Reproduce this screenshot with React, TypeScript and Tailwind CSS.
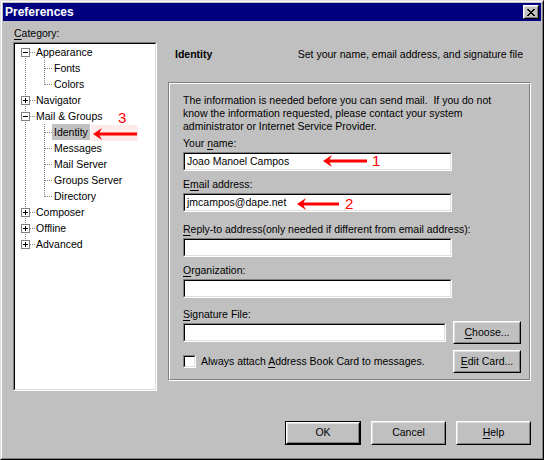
import type { ReactNode } from 'react';

type TreeRow = {
  label: string;
  level: 0 | 1;
  expander?: '+' | '-';
  first?: boolean;
  last?: boolean;
  lastChild?: boolean;
  selected?: boolean;
};

const treeRows: TreeRow[] = [
  { label: 'Appearance', level: 0, expander: '-', first: true },
  { label: 'Fonts', level: 1 },
  { label: 'Colors', level: 1, lastChild: true },
  { label: 'Navigator', level: 0, expander: '+' },
  { label: 'Mail & Groups', level: 0, expander: '-' },
  { label: 'Identity', level: 1, selected: true },
  { label: 'Messages', level: 1 },
  { label: 'Mail Server', level: 1 },
  { label: 'Groups Server', level: 1 },
  { label: 'Directory', level: 1, lastChild: true },
  { label: 'Composer', level: 0, expander: '+' },
  { label: 'Offline', level: 0, expander: '+' },
  { label: 'Advanced', level: 0, expander: '+', last: true },
];

function U({ children }: { children: string }) {
  return <span className="underline underline-offset-[2px]">{children}</span>;
}

function Sunken({ className = '', children }: { className?: string; children?: ReactNode }) {
  return (
    <div className={`border border-t-[#808080] border-l-[#808080] border-b-white border-r-white ${className}`}>
      <div className="h-full border border-t-black border-l-black border-b-[#dfdfdf] border-r-[#dfdfdf] bg-white">
        {children}
      </div>
    </div>
  );
}

function WinButton({ children, className = '', isDefault = false }: { children: ReactNode; className?: string; isDefault?: boolean }) {
  return (
    <button className={`bg-[#c0c0c0] p-0 ${isDefault ? 'border border-black' : ''} ${className}`}>
      <div className="h-full border border-t-white border-l-white border-b-black border-r-black">
        <div className="h-full border border-t-[#dfdfdf] border-l-[#dfdfdf] border-b-[#808080] border-r-[#808080] flex items-center justify-center">
          {children}
        </div>
      </div>
    </button>
  );
}

function TextField({ value = '', width = 'w-[269px]' }: { value?: string; width?: string }) {
  return (
    <Sunken className={`h-[19px] ${width}`}>
      <div className="h-full pl-[2px] flex items-center leading-none">{value}</div>
    </Sunken>
  );
}

function Connector({ row }: { row: TreeRow }) {
  const w = row.level === 0 ? 21 : 38;
  const dot = { stroke: '#808080', strokeWidth: 1, strokeDasharray: '1 1' };
  return (
    <svg width={w} height={16} shapeRendering="crispEdges" className="shrink-0">
      <line x1={10.5} x2={10.5} y1={row.first ? 8 : 0} y2={row.last ? 8 : 16} {...dot} />
      {row.level === 1 && (
        <>
          <line x1={29.5} x2={29.5} y1={0} y2={row.lastChild ? 9 : 16} {...dot} />
          <line x1={30} x2={38} y1={8.5} y2={8.5} {...dot} />
        </>
      )}
      {row.level === 0 && (
        <>
          <line x1={15} x2={21} y1={8.5} y2={8.5} {...dot} />
          <rect x={6.5} y={4.5} width={8} height={8} fill="white" stroke="#808080" />
          <line x1={8} x2={13} y1={8.5} y2={8.5} stroke="black" />
          {row.expander === '+' && <line x1={10.5} x2={10.5} y1={6} y2={11} stroke="black" />}
        </>
      )}
    </svg>
  );
}

function Arrow({ left, top, width }: { left: number; top: number; width: number }) {
  return (
    <svg className="absolute" style={{ left, top }} width={width} height={12} viewBox={`0 0 ${width} 12`}>
      <polygon points={`0,6 9,0 6.5,4.5 ${width},4.5 ${width},7.5 6.5,7.5 9,12`} fill="#ff0000" />
    </svg>
  );
}

export default function App() {
  return (
    <div className="w-[544px] h-[460px] relative font-['Liberation_Sans',Arial,sans-serif] text-[10.5px] text-black bg-[#c0c0c0] border border-t-[#dfdfdf] border-l-[#dfdfdf] border-b-black border-r-black">
      <div className="h-full border border-t-white border-l-white border-b-[#808080] border-r-[#808080] p-[1px] flex flex-col">
        {/* title bar */}
        <div className="h-[18px] bg-[#000080] flex items-center justify-between pl-[2px] pr-[2px]">
          <span className="text-white font-bold text-[12px] leading-none">Preferences</span>
          <WinButton className="w-[16px] h-[14px]">
            <svg width={8} height={7} shapeRendering="crispEdges">
              <path d="M0 0h2v1H0zM6 0h2v1H6zM1 1h2v1H1zM5 1h2v1H5zM2 2h4v1H2zM3 3h2v1H3zM2 4h4v1H2zM1 5h2v1H1zM5 5h2v1H5zM0 6h2v1H0zM6 6h2v1H6z" fill="black" />
            </svg>
          </WinButton>
        </div>

        {/* body */}
        <div className="flex pl-[10px] pr-[10px] mt-[6px]">
          {/* category tree */}
          <div className="w-[144px] flex flex-col">
            <div className="h-[13px] leading-[13px] pl-[1px]">
              <U>C</U>ategory:
            </div>
            <Sunken className="mt-[2px] h-[349px] w-[144px]">
              <div className="flex flex-col">
                {treeRows.map((row) => (
                  <div key={row.label} className="h-[16px] flex items-center">
                    <Connector row={row} />
                    <span
                      className={`h-[16px] leading-[16px] px-[2px] whitespace-nowrap ${
                        row.selected ? 'bg-[#c0c0c0]' : ''
                      } ${row.level === 1 ? '-ml-[1px]' : '-ml-[2px]'}`}
                    >
                      {row.label}
                    </span>
                  </div>
                ))}
              </div>
            </Sunken>
          </div>

          {/* identity panel */}
          <div className="w-[363px] ml-[11px] flex flex-col">
            <div className="mt-[21px] h-[13px] leading-[13px] flex justify-between pl-[7px] pr-[8px]">
              <span className="font-bold">Identity</span>
              <span>Set your name, email address, and signature file</span>
            </div>

            <div className="mt-[21px] h-[299px] border border-t-[#808080] border-l-[#808080] border-b-white border-r-white">
              <div className="h-full border border-t-white border-l-white border-b-[#808080] border-r-[#808080] pl-[13px] pr-[8px] pt-[10px] flex flex-col">
                <p className="leading-[13px]">
                  The information is needed before you can send mail.&nbsp; If you do not
                  <br />
                  know the information requested, please contact your system
                  <br />
                  administrator or Internet Service Provider.
                </p>

                <div className="mt-[4px] h-[13px] leading-[13px]">
                  Your <U>n</U>ame:
                </div>
                <div className="mt-[2px]">
                  <TextField value="Joao Manoel Campos" />
                </div>

                <div className="mt-[7px] h-[13px] leading-[13px]">
                  E<U>m</U>ail address:
                </div>
                <div className="mt-[2px]">
                  <TextField value="jmcampos@dape.net" />
                </div>

                <div className="mt-[11px] h-[13px] leading-[13px]">
                  <U>R</U>eply-to address(only needed if different from email address):
                </div>
                <div className="mt-[2px]">
                  <TextField />
                </div>

                <div className="mt-[7px] h-[13px] leading-[13px]">
                  <U>O</U>rganization:
                </div>
                <div className="mt-[2px]">
                  <TextField />
                </div>

                <div className="mt-[10px] h-[13px] leading-[13px]">
                  <U>S</U>ignature File:
                </div>
                <div className="flex items-center justify-between h-[23px]">
                  <TextField width="w-[263px]" />
                  <WinButton className="w-[68px] h-[23px]">
                    <span>
                      <U>C</U>hoose...
                    </span>
                  </WinButton>
                </div>

                <div className="mt-[6px] flex items-center justify-between h-[23px]">
                  <div className="flex items-center">
                    <Sunken className="w-[13px] h-[13px]" />
                    <span className="ml-[5px] leading-[13px]">
                      Always attach <U>A</U>ddress Book Card to messages.
                    </span>
                  </div>
                  <WinButton className="w-[68px] h-[23px]">
                    <span>
                      <U>E</U>dit Card...
                    </span>
                  </WinButton>
                </div>
              </div>
            </div>
          </div>
        </div>

        {/* dialog buttons */}
        <div className="mt-[30px] flex justify-end gap-[10px] pr-[10px]">
          <WinButton isDefault className="w-[76px] h-[24px]">
            OK
          </WinButton>
          <WinButton className="w-[75px] h-[24px]">Cancel</WinButton>
          <WinButton className="w-[75px] h-[24px]">
            <span>
              <U>H</U>elp
            </span>
          </WinButton>
        </div>
      </div>

      {/* red annotations */}
      <div className="absolute left-[90px] top-[124px] w-[47px] h-[16px] bg-[#fdeaea]" />
      <Arrow left={92} top={127} width={44} />
      <span className="absolute left-[117px] top-[109px] text-[15px] leading-none text-[#ff0000]">3</span>

      <Arrow left={322} top={154} width={44} />
      <span className="absolute left-[371px] top-[152px] text-[15px] leading-none text-[#ff0000]">1</span>

      <Arrow left={296} top={197} width={42} />
      <span className="absolute left-[344px] top-[195px] text-[15px] leading-none text-[#ff0000]">2</span>
    </div>
  );
}
